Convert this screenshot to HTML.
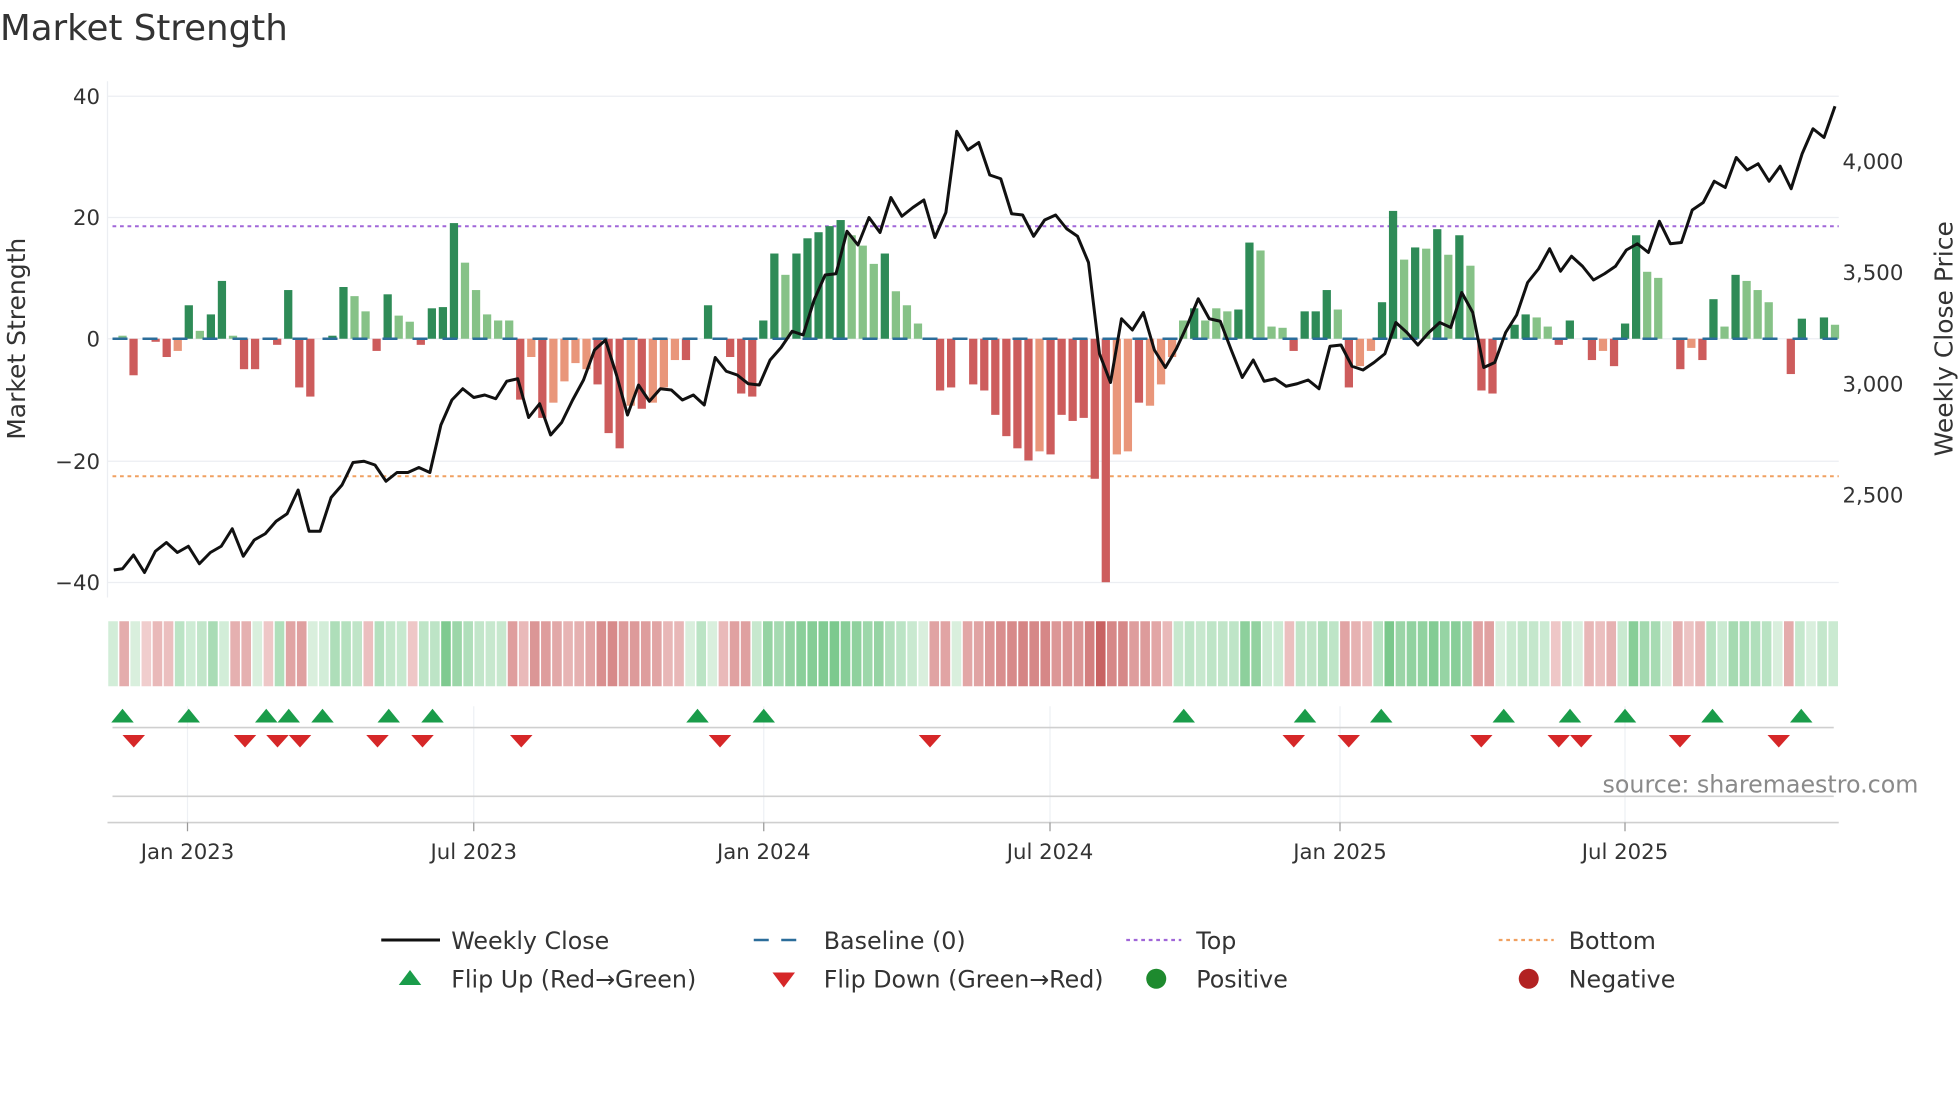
<!DOCTYPE html>
<html><head><meta charset="utf-8"><style>
html,body{margin:0;padding:0;background:#fff;}
svg{display:block;font-family:"DejaVu Sans","Liberation Sans",sans-serif;}
</style></head><body>
<svg id="s" width="1960" height="1102" viewBox="0 0 1568 881.6" xmlns="http://www.w3.org/2000/svg">
<rect width="1568" height="882" fill="#fff"/>
<text x="0" y="32" font-size="28.5" fill="#333">Market Strength</text>
<g stroke="#eceef2" stroke-width="1">
<line x1="86" y1="77" x2="1471" y2="77"/><line x1="86" y1="174" x2="1471" y2="174"/>
<line x1="86" y1="369" x2="1471" y2="369"/><line x1="86" y1="466" x2="1471" y2="466"/>
<line x1="86" y1="271" x2="1471" y2="271"/>
<line x1="86" y1="65" x2="86" y2="478"/>
</g>
<g font-size="17" fill="#333" text-anchor="end">
<text x="80" y="83">40</text><text x="80" y="180">20</text><text x="80" y="277">0</text>
<text x="80" y="375">−20</text><text x="80" y="472">−40</text>
</g>
<g font-size="17" fill="#333">
<text x="1474" y="135">4,000</text><text x="1474" y="224">3,500</text>
<text x="1474" y="313">3,000</text><text x="1474" y="402">2,500</text>
</g>
<text transform="translate(20,271) rotate(-90)" font-size="20" fill="#333" text-anchor="middle">Market Strength</text>
<text transform="translate(1562,271) rotate(-90)" font-size="20" fill="#333" text-anchor="middle">Weekly Close Price</text>
<line x1="90" y1="181" x2="1471" y2="181" stroke="#a066d8" stroke-width="1.6" stroke-dasharray="3,3"/>
<line x1="90" y1="381" x2="1471" y2="381" stroke="#f0a060" stroke-width="1.6" stroke-dasharray="3,3"/>
<g id="bars"></g>
<line x1="90" y1="271" x2="1471" y2="271" stroke="#2b6d9a" stroke-width="2" stroke-dasharray="12,12"/>
<polyline id="price" fill="none" stroke="#111" stroke-width="2.4" stroke-linejoin="round"/>
<g id="heat"></g>
<g stroke="#eef0f4" stroke-width="1">
<line x1="150" y1="565" x2="150" y2="658"/><line x1="379" y1="565" x2="379" y2="658"/>
<line x1="611" y1="565" x2="611" y2="658"/><line x1="840" y1="565" x2="840" y2="658"/>
<line x1="1072" y1="565" x2="1072" y2="658"/><line x1="1300" y1="565" x2="1300" y2="658"/>
</g>
<line x1="90" y1="582" x2="1467" y2="582" stroke="#cfcfcf" stroke-width="1.3"/>
<line x1="90" y1="637" x2="1467" y2="637" stroke="#cfcfcf" stroke-width="1.3"/>
<line x1="86" y1="658" x2="1471" y2="658" stroke="#cfcfcf" stroke-width="1.3"/>
<g id="flips"></g>
<g stroke="#999" stroke-width="1">
<line x1="150" y1="658" x2="150" y2="665"/><line x1="379" y1="658" x2="379" y2="665"/>
<line x1="611" y1="658" x2="611" y2="665"/><line x1="840" y1="658" x2="840" y2="665"/>
<line x1="1072" y1="658" x2="1072" y2="665"/><line x1="1300" y1="658" x2="1300" y2="665"/>
</g>
<g font-size="17" fill="#333" text-anchor="middle">
<text x="150" y="687">Jan 2023</text><text x="379" y="687">Jul 2023</text>
<text x="611" y="687">Jan 2024</text><text x="840" y="687">Jul 2024</text>
<text x="1072" y="687">Jan 2025</text><text x="1300" y="687">Jul 2025</text>
</g>
<text x="1282" y="634" font-size="19" fill="#8a8a8a">source: sharemaestro.com</text>
<g font-size="19" fill="#333">
<line x1="305" y1="752" x2="352" y2="752" stroke="#111" stroke-width="2.4"/>
<text x="361" y="759">Weekly Close</text>
<line x1="603" y1="752" x2="646" y2="752" stroke="#2b6d9a" stroke-width="2" stroke-dasharray="12,10"/>
<text x="659" y="759">Baseline (0)</text>
<line x1="901" y1="752" x2="945" y2="752" stroke="#a066d8" stroke-width="1.8" stroke-dasharray="3,3"/>
<text x="957" y="759">Top</text>
<line x1="1199" y1="752" x2="1243" y2="752" stroke="#f0a060" stroke-width="1.8" stroke-dasharray="3,3"/>
<text x="1255" y="759">Bottom</text>
<polygon points="319,788 337,788 328,776" fill="#1a9c4a"/>
<text x="361" y="790">Flip Up (Red→Green)</text>
<polygon points="618,778 636,778 627,790" fill="#d62728"/>
<text x="659" y="790">Flip Down (Green→Red)</text>
<circle cx="925" cy="783" r="8" fill="#1e8a2e"/>
<text x="957" y="790">Positive</text>
<circle cx="1223" cy="783" r="8" fill="#b22222"/>
<text x="1255" y="790">Negative</text>
</g>
</svg>
<script>
var NS="http://www.w3.org/2000/svg";
function el(t,a,p){var e=document.createElementNS(NS,t);for(var k in a)e.setAttribute(k,a[k]);p.appendChild(e);return e;}
var B="l0.5 r-6 z0 r-0.5 r-3 o-2 d5.5 l1.3 d4 d9.5 l0.5 r-5 r-5 z0 r-1 d8 r-8 r-9.5 z0 d0.5 d8.5 l7 l4.5 r-2 d7.3 l3.8 l2.8 r-1 d5 d5.2 d19 l12.5 l8 l4 l3 l3 r-10 o-3 r-13 o-10.5 o-7 o-4 o-5 r-7.5 r-15.5 r-18 o-11 r-11.5 o-10.5 o-8 o-3.5 r-3.5 z0 d5.5 z0 r-3 r-9 r-9.5 d3 d14 l10.5 d14 d16.5 d17.5 d18.5 d19.5 l17 l15.3 l12.3 d14 l7.8 l5.5 l2.5 z0 r-8.5 r-8 z0 r-7.5 r-8.5 r-12.5 r-16 r-18 r-20 o-18.5 r-19 r-12.5 r-13.5 r-13 r-23 r-40 o-19 o-18.5 r-10.5 o-11 o-7.5 o-3 l3 d5 l3 l5 l4.5 d4.8 d15.8 l14.5 l2 l1.8 r-2 d4.5 d4.5 d8 l4.8 r-8 o-4.5 o-2 d6 d21 l13 d15 l14.8 d18 l13.8 d17 l12 r-8.5 r-9 z0 d2.3 d4 l3.5 l2 r-1 d3 z0 r-3.5 o-2 r-4.5 d2.5 d17 l11 l10 z0 r-5 o-1.5 r-3.5 d6.5 l2 d10.5 l9.5 l8 l6 z0 r-5.8 d3.3 z0 d3.5 l2.3".split(" ");
var col={d:"#2e8b57",l:"#86c287",r:"#cd5c5c",o:"#e9967a",z:"#fff"};
var bars=document.getElementById("bars"),heat=document.getElementById("heat");
var n=B.length,x0=98,dx=(1468-98)/(n-1),hw=1385/n;
B.forEach(function(s,i){
 var t=s[0],v=parseFloat(s.slice(1)),x=x0+i*dx;
 var h=Math.abs(v)*4.87,y=v>=0?271-h:271;
 if(t!="z"&&h>0)el("rect",{x:x-3.3,y:y,width:6.6,height:Math.max(h,1),fill:col[t]},bars);
 var c;
 if(v>0){var f=Math.min(v/20,1);c="rgb("+Math.round(212-f*90)+","+Math.round(238-f*38)+","+Math.round(218-f*78)+")";}
 else if(v<0){var f=Math.min(-v/40,1);f=Math.sqrt(f);c="rgb("+Math.round(245-f*45)+","+Math.round(218-f*120)+","+Math.round(218-f*120)+")";}
 else c="#d9efdd";
 el("rect",{x:86+i*hw+0.6,y:497,width:hw-1.2,height:52,fill:c},heat);
});
var P=[455,444,458,441,434,442,437,451,442,437,423,445,432,427,417,411,392,425,425,398,388,370,369,372,385,378,378,374,378,340,320,311,318,316,319,305,303,334,323,348,338,320,304,280,272,300,332,308,321,311,312,320,316,324,286,297,300,307,308,288,278,265,268,240,220,219,185,196,174,186,158,173,166,160,190,170,105,120,114,140,143,171,172,189,176,172,183,189,210,283,306,255,264,250,280,294,279,260,239,255,257,280,302,288,305,303,309,307,304,311,277,276,293,296,290,283,258,266,276,266,258,262,234,250,294,290,266,252,226,215,199,217,205,213,224,219,213,200,195,202,177,195,194,168,162,145,150,126,136,131,145,133,151,123,103,110,85];
var pdx=(1468-98)/(P.length-1);
var pts=["91,456"];P.forEach(function(y,i){pts.push((x0+i*pdx).toFixed(1)+","+y);});
document.getElementById("price").setAttribute("points",pts.join(" "));
var fl=document.getElementById("flips");
[98,151,213,231,258,311,346,558,611,947,1044,1105,1203,1256,1300,1370,1441].forEach(function(x){el("polygon",{points:(x-9)+",578 "+(x+9)+",578 "+x+",567",fill:"#1a9c4a"},fl);});
[107,196,222,240,302,338,417,576,744,1035,1079,1185,1247,1265,1344,1423].forEach(function(x){el("polygon",{points:(x-9)+",588 "+(x+9)+",588 "+x+",598",fill:"#d62728"},fl);});
</script>
</body></html>
